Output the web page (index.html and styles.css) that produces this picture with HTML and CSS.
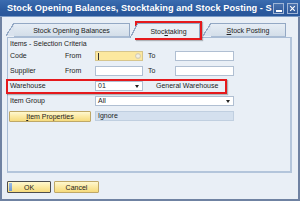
FILE: index.html
```html
<!DOCTYPE html>
<html>
<head>
<meta charset="utf-8">
<link rel="stylesheet" href="styles.css">
</head>
<body>
<div class="window">
  <div class="titlebar">
    <span class="title">Stock Opening Balances, Stocktaking and Stock Posting - S</span>
    <div class="ctrls">
      <span class="cbtn"><span class="minbar"></span></span>
      <span class="cbtn">
        <svg width="7" height="7" viewBox="0 0 7 7"><path d="M1.2 1.2 L5.8 5.8 M5.8 1.2 L1.2 5.8" stroke="#fff" stroke-width="1.1"/></svg>
      </span>
    </div>
  </div>
  <div class="body">
    <div class="tabs">
      <div class="tab t1">Stock Opening Balances</div>
      <div class="tab t2 active">Stoc<u>k</u>taking</div>
      <div class="tab t3"><u>S</u>tock Posting</div>
    </div>
    <div class="panel">
      <div class="heading">Items - Selection Criteria</div>
      <div class="grid">
        <span class="lbl">Code</span>
        <span class="lbl">From</span>
        <span class="field focus"><span class="caret"></span>
          <svg class="clr" width="6" height="6" viewBox="0 0 6 6"><circle cx="3" cy="3" r="2.5" fill="#e9e4d2" stroke="#c9c2ad" stroke-width="0.7"/><path d="M1.5 3 H4.5" stroke="#fff" stroke-width="0.8"/></svg>
        </span>
        <span class="lbl to">To</span>
        <span class="field"></span>

        <span class="lbl">Supplier</span>
        <span class="lbl">From</span>
        <span class="field"></span>
        <span class="lbl to">To</span>
        <span class="field"></span>

        <span class="lbl">Warehouse</span>
        <span></span>
        <span class="field combo">01<span class="arrow"></span></span>
        <span class="desc">General Warehouse</span>

        <span class="lbl">Item Group</span>
        <span></span>
        <span class="field combo wide">All<span class="arrow"></span></span>

        <span class="btn props"><u>I</u>tem Properties</span>
        <span class="field ro wide">Ignore</span>
      </div>
    </div>
    <div class="footer">
      <span class="btn ok"><span class="strip"></span>OK</span>
      <span class="btn cancel">Cancel</span>
    </div>
  </div>
  <div class="mark mark-tab"></div>
  <div class="mark mark-wh"></div>
</div>
</body>
</html>
```
FILE: styles.css
```css
* { box-sizing: border-box; }
html, body { margin: 0; padding: 0; }
body {
  width: 300px;
  height: 201px;
  overflow: hidden;
  font-family: "Liberation Sans", Arial, sans-serif;
  font-size: 7px;
  color: #1d1d1d;
  background: #e9eff6;
}
.window {
  position: relative;
  width: 300px;
  height: 201px;
  display: flex;
  flex-direction: column;
}
.titlebar {
  height: 17px;
  flex: none;
  display: flex;
  align-items: center;
  padding-left: 7px;
  padding-right: 2px;
  background: linear-gradient(#3a6cb0, #2c5b9f 60%, #28569a);
  border-bottom: 1px solid #7d9cc6;
}
.title {
  flex: 1;
  color: #fff;
  font-weight: bold;
  font-size: 9.2px;
  white-space: nowrap;
  overflow: hidden;
  letter-spacing: 0.05px;
}
.ctrls {
  display: flex;
  gap: 3px;
  margin-top: 1px;
}
.cbtn {
  width: 11px;
  height: 11px;
  border: 1px solid #9fb5d6;
  background: linear-gradient(#4a72ad, #30599a);
  display: flex;
  align-items: center;
  justify-content: center;
}
.minbar {
  width: 6px;
  height: 2px;
  background: #fff;
  margin-top: 4px;
}
.body {
  flex: 1;
  display: flex;
  flex-direction: column;
  border-left: 2px solid #6f82a2;
  border-right: 2px solid #6f82a2;
  border-bottom: 2px solid #6f82a2;
  background: #e9eff6;
}
.tabs {
  display: flex;
  height: 14px;
  margin-top: 6px;
  padding-left: 12px;
  position: relative;
  z-index: 1;
}
.tab {
  position: relative;
  height: 14px;
  display: flex;
  align-items: center;
  justify-content: center;
  padding-top: 1px;
  border-top: 1px solid #93a8c4;
  border-right: 1px solid #93a8c4;
  background: linear-gradient(#e6edf5, #d3dee9);
  color: #222;
  white-space: nowrap;
}
.tab::before {
  content: "";
  position: absolute;
  left: -8px;
  top: -1px;
  bottom: 0;
  width: 8px;
  background: linear-gradient(to bottom right, transparent calc(50% - 0.6px), #93a8c4 calc(50% - 0.6px), #93a8c4 calc(50% + 0.6px), #dae3ee calc(50% + 0.6px));
}
.t1 { width: 116px; border-bottom: 1px solid #a9bcd4; }
.t2 { width: 62px; margin-left: 8px; }
.t3 { width: 75px; margin-left: 11px; border-bottom: 1px solid #a9bcd4; }
.tab.active {
  background: #e9eff6;
  height: 15px;
}
.tab.active::before {
  background: linear-gradient(to bottom right, transparent calc(50% - 0.6px), #93a8c4 calc(50% - 0.6px), #93a8c4 calc(50% + 0.6px), #e9eff6 calc(50% + 0.6px));
}
.panel {
  margin-left: 5px;
  width: 285px;
  height: 136px;
  margin-top: 0;
  border: 1px solid #a9bcd4;
  border-right: 2px solid #b3c5db;
  border-bottom: 2px solid #b3c5db;
  padding: 1px 0 0 2px;
}
.heading {
  height: 10px;
  line-height: 10px;
}
.grid {
  margin-top: 2px;
  display: grid;
  grid-template-columns: 55px 30px 48px 32px 59px;
  grid-auto-rows: 10px;
  row-gap: 5px;
  align-items: center;
}
.lbl { line-height: 10px; }
.to { padding-left: 5px; }
.field {
  height: 10px;
  border: 1px solid #b0bfd2;
  background: #fff;
  display: flex;
  align-items: center;
  padding-left: 2px;
  position: relative;
  line-height: 8px;
}
.field.focus {
  background: #fce89f;
  border-color: #d6c58c;
  justify-content: space-between;
  padding-right: 1px;
}
.caret {
  width: 1px;
  height: 7px;
  background: #333;
}
.combo { justify-content: space-between; padding-right: 3px; }
.arrow {
  width: 0;
  height: 0;
  border-left: 2.5px solid transparent;
  border-right: 2.5px solid transparent;
  border-top: 3px solid #222;
}
.wide { grid-column: 3 / 6; }
.desc {
  grid-column: 4 / 6;
  padding-left: 13px;
  line-height: 10px;
}
.ro {
  background: #d4e0ee;
  border-color: #c0cfe0;
}
.btn {
  display: flex;
  align-items: center;
  justify-content: center;
  background: linear-gradient(#fff8cf, #fbe9a2 50%, #f6db7c);
  border: 1px solid #bfa867;
  border-radius: 1px;
  color: #1d1d1d;
}
.props {
  grid-column: 1 / 3;
  height: 11px;
  margin-left: -1px;
  margin-right: 4px;
}
.footer {
  display: flex;
  gap: 3px;
  margin-top: 8px;
  padding-left: 5px;
}
.footer .btn { height: 12px; }
.ok {
  width: 44px;
  border-color: #4d4d4d;
  position: relative;
}
.strip {
  position: absolute;
  left: 1px;
  top: 1px;
  bottom: 1px;
  width: 3px;
  background: linear-gradient(#9bbbe3, #6f98d2);
}
.cancel { width: 45px; }
.mark {
  position: absolute;
  border: 2px solid #e5191c;
  box-shadow: 1px 1px 1px rgba(0,0,0,0.25);
  pointer-events: none;
}
.mark-tab { left: 135px; top: 21px; width: 67px; height: 19px; }
.mark-wh { left: 6px; top: 79px; width: 221px; height: 15px; }
```
